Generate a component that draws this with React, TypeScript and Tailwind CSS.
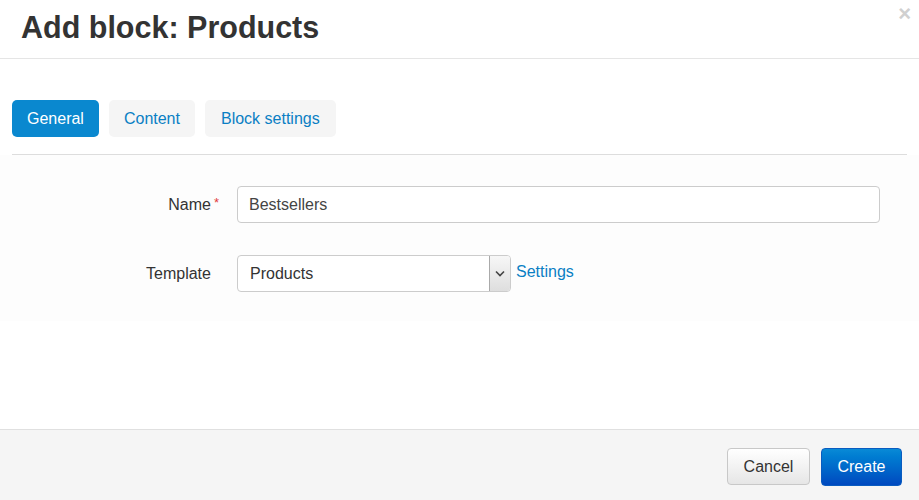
import React from 'react'

const App: React.FC = () => {
  return (
    <div className="w-[919px] h-[500px] bg-white flex flex-col text-[#333] font-['Liberation_Sans',Arial,sans-serif] overflow-hidden">
      {/* Header */}
      <div className="relative h-[59px] border-b border-[#e5e5e5] pl-[21px] pt-[9px]">
        <h1 className="text-[30.5px] leading-[36px] font-bold text-[#333]">Add block: Products</h1>
        <span className="absolute right-[8px] top-[3px] text-[22px] leading-[22px] font-bold text-[#d0d0d0]">×</span>
      </div>

      {/* Body */}
      <div className="flex-1 flex flex-col">
        <div className="px-[12px] pt-[41px]">
          <div className="flex gap-[10px] pb-[17px] border-b border-[#dddddd]">
            <button className="h-[37px] px-[15px] rounded-[5px] bg-[#0a88cf] text-white text-[16px]">General</button>
            <button className="h-[37px] px-[15px] rounded-[5px] bg-[#f5f5f5] text-[#0a7fc4] text-[16px]">Content</button>
            <button className="h-[37px] px-[16px] rounded-[5px] bg-[#f5f5f5] text-[#0a7fc4] text-[16px]">Block settings</button>
          </div>
        </div>

        <div className="bg-[#fdfdfd] h-[166px] pt-[31px] flex flex-col gap-[32px]">
          <div className="flex items-center">
            <div className="w-[222px] pr-[3px] text-right text-[16px] text-[#333]">
              Name<span className="text-[#e23c3c] ml-[3px] relative top-[-3px] text-[13px]">*</span>
            </div>
            <div className="ml-[15px] w-[643px] h-[37px] rounded-[4px] border border-[#cccccc] bg-white flex items-center pl-[11px] text-[16px] text-[#444]">
              Bestsellers
            </div>
          </div>
          <div className="flex items-center">
            <div className="w-[225px] pl-[146px] text-[16px] text-[#333]">Template</div>
            <div className="ml-[12px] w-[274px] h-[37px] rounded-[4px] border border-[#cccccc] bg-white flex items-stretch overflow-hidden">
              <div className="flex-1 flex items-center pl-[12px] text-[16px] text-[#333]">Products</div>
              <div className="w-[21px] border-l border-[#aaaaaa] bg-gradient-to-b from-[#f7f7f7] to-[#dedede] flex items-center justify-center">
                <svg width="10" height="7" viewBox="0 0 10 7">
                  <path d="M1 1.5 L5 5.5 L9 1.5" fill="none" stroke="#444" strokeWidth="1.6" />
                </svg>
              </div>
            </div>
            <a className="ml-[5px] text-[16px] text-[#0a7fc4] relative top-[-2px]">Settings</a>
          </div>
        </div>
        <div className="flex-1" />
      </div>

      {/* Footer */}
      <div className="h-[71px] border-t border-[#e0e0e0] bg-[#f5f5f5] flex items-center justify-end gap-[11px] pr-[17px] pt-[3px]">
        <button className="h-[37px] w-[83px] rounded-[4px] border border-[#c8c8c8] bg-gradient-to-b from-white to-[#e6e6e6] text-[16px] text-[#333]">Cancel</button>
        <button className="h-[38px] w-[81px] rounded-[4px] border border-[#0a5cc0] bg-gradient-to-b from-[#0a8ad6] to-[#0048bf] text-[16px] text-white">Create</button>
      </div>
    </div>
  )
}

export default App
